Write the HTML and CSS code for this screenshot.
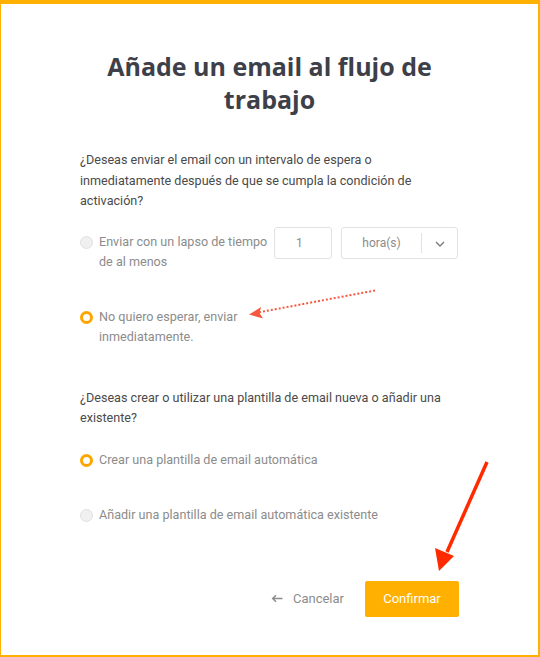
FILE: index.html
```html
<!DOCTYPE html>
<html lang="es">
<head>
<meta charset="utf-8">
<link rel="stylesheet" href="styles.css">
</head>
<body>
<div class="frame">
  <div class="content">
    <h1 class="title">Añade un email al flujo de trabajo</h1>

    <p class="question q1">¿Deseas enviar el email con un intervalo de espera o inmediatamente después de que se cumpla la condición de activación?</p>

    <div class="option-row delay">
      <span class="radio"></span>
      <span class="label label-delay">Enviar con un lapso de tiempo de al menos</span>
      <div class="num-input">1</div>
      <div class="select">
        <span class="select-value">hora(s)</span>
        <span class="select-divider"></span>
        <span class="select-arrow">
          <svg width="10" height="6" viewBox="0 0 10 6"><path d="M1 1l4 4 4-4" fill="none" stroke="#7a7a7a" stroke-width="1.3"/></svg>
        </span>
      </div>
    </div>

    <div class="option-row immediate">
      <span class="radio checked"></span>
      <span class="label label-immediate">No quiero esperar, enviar inmediatamente.</span>
    </div>

    <p class="question q2">¿Deseas crear o utilizar una plantilla de email nueva o añadir una existente?</p>

    <div class="option-row create">
      <span class="radio checked"></span>
      <span class="label">Crear una plantilla de email automática</span>
    </div>

    <div class="option-row existing">
      <span class="radio"></span>
      <span class="label">Añadir una plantilla de email automática existente</span>
    </div>

    <div class="actions">
      <span class="cancel">
        <svg width="12" height="9" viewBox="0 0 12 9"><path d="M11.5 4.5H1.8M5 1.2L1.7 4.5 5 7.8" fill="none" stroke="#8c8c8c" stroke-width="1.5"/></svg>
        <span>Cancelar</span>
      </span>
      <span class="confirm">Confirmar</span>
    </div>
  </div>

  <svg class="annot annot-dotted" width="540" height="657" viewBox="0 0 540 657">
    <line x1="375" y1="290.5" x2="258" y2="312.5" stroke="#f4583f" stroke-width="2" stroke-dasharray="2 2"/>
    <path d="M249 314.5 L261 307 L259.5 313 L263 318.5 Z" fill="#f4583f"/>
  </svg>
  <svg class="annot annot-solid" width="540" height="657" viewBox="0 0 540 657">
    <line x1="487" y1="462" x2="447" y2="552" stroke="#ff2a00" stroke-width="3.5"/>
    <path d="M439 571 L435 548 L454 556 Z" fill="#ff2a00"/>
  </svg>
</div>
</body>
</html>
```

FILE: styles.css
```css
* { box-sizing: border-box; }
html, body { margin: 0; padding: 0; background: #fff; }
body { width: 540px; height: 657px; overflow: hidden; }

.frame {
  position: relative;
  width: 540px;
  height: 657px;
  border-top: 4px solid #ffb000;
  border-left: 1px solid #ffb000;
  border-right: 2px solid #ffb000;
  border-bottom: 2px solid #ffb000;
  font-family: Roboto, "Liberation Sans", sans-serif;
}

.content {
  width: 379px;
  margin-left: 79px;
  display: flex;
  flex-direction: column;
}

.title {
  margin: 46px 0 0;
  font-family: "Open Sans", "Liberation Sans", sans-serif;
  font-weight: 700;
  font-size: 25px;
  line-height: 33px;
  color: #3e4049;
  text-align: center;
}

.question {
  margin: 0;
  font-size: 12.6px;
  line-height: 20.5px;
  color: #4a4a4a;
}
.q1 { margin-top: 34px; }
.q2 { margin-top: 41px; }

.option-row {
  display: flex;
  align-items: flex-start;
  font-size: 12.6px;
  line-height: 20px;
  color: #8c8c8c;
}
.option-row .label { margin-left: 6px; }

.delay { margin-top: 15px; }
.label-delay { width: 172px; padding-top: 5px; }
.immediate { margin-top: 35px; }
.label-immediate { width: 160px; }
.create { margin-top: 21px; }
.existing { margin-top: 35px; }

.radio {
  flex: none;
  width: 13px;
  height: 13px;
  margin-top: 4px;
  border-radius: 50%;
  background: #f0f0f0;
  border: 1px solid #e0e0e0;
}
.radio.checked {
  background: #fff;
  border: 3px solid #ffa500;
}
.delay .radio { margin-top: 9px; }

.num-input {
  flex: none;
  margin-left: 3px;
  width: 58px;
  height: 32px;
  border: 1px solid #e2e2e2;
  border-radius: 3px;
  padding-left: 21px;
  line-height: 30px;
  font-size: 12px;
  color: #8c8c8c;
}

.select {
  flex: none;
  margin-left: 9px;
  width: 117px;
  height: 32px;
  border: 1px solid #e2e2e2;
  border-radius: 3px;
  display: flex;
  align-items: center;
}
.select-value {
  width: 79px;
  text-align: center;
  font-size: 12px;
  color: #8c8c8c;
}
.select-divider {
  width: 1px;
  height: 20px;
  background: #e2e2e2;
}
.select-arrow {
  flex: 1;
  display: flex;
  justify-content: center;
  padding-top: 3px;
}

.actions {
  margin-top: 56px;
  display: flex;
  justify-content: flex-end;
  align-items: center;
  font-size: 13px;
}
.cancel {
  display: flex;
  align-items: center;
  gap: 10px;
  color: #8c8c8c;
  margin-right: 21px;
}
.confirm {
  width: 94px;
  height: 36px;
  background: #ffb000;
  border-radius: 2px;
  color: #fff;
  display: flex;
  align-items: center;
  justify-content: center;
  font-size: 13px;
}

.annot {
  position: absolute;
  left: -1px;
  top: -4px;
  pointer-events: none;
}
```
